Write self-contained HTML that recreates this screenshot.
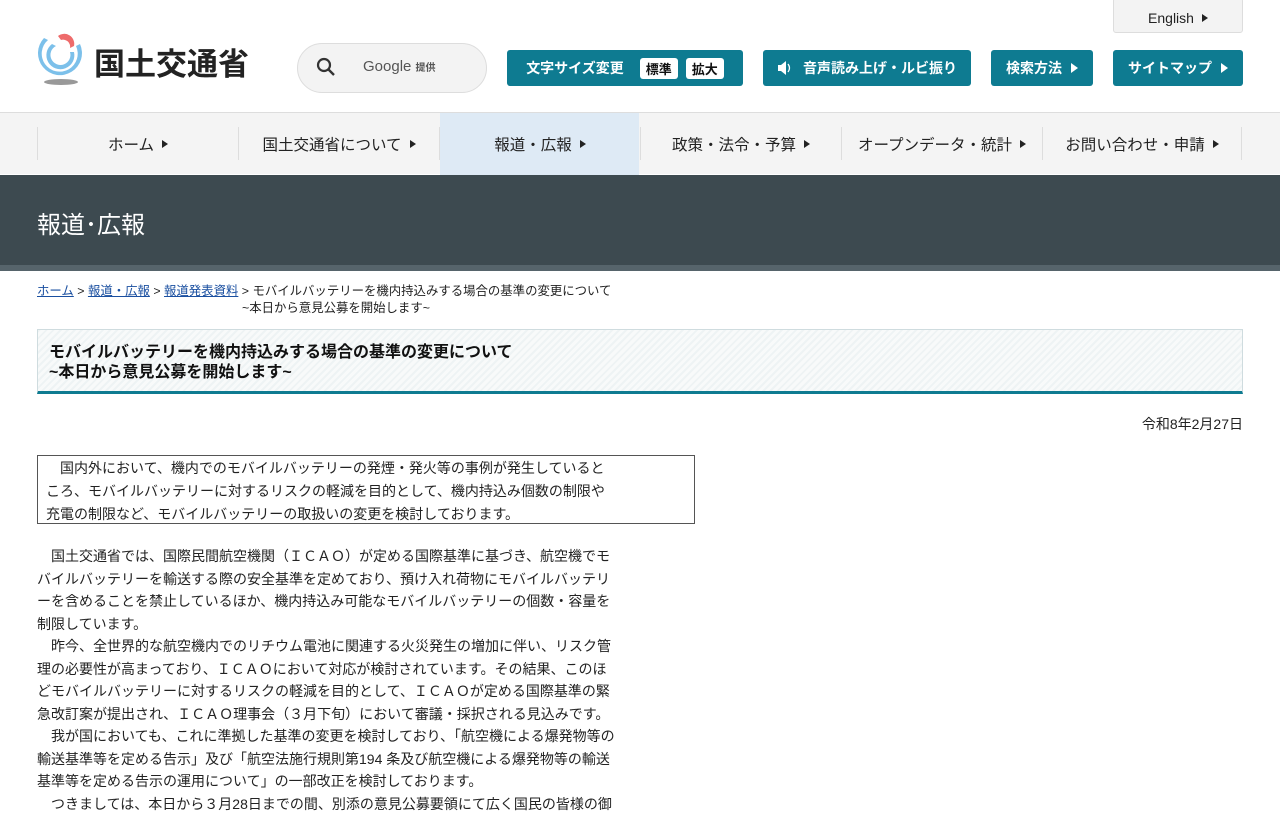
<!DOCTYPE html>
<html><head><meta charset="utf-8">
<style>
*{margin:0;padding:0;box-sizing:border-box}
body{width:1280px;height:800px;overflow:hidden;background:#fff;font-family:"Liberation Sans","Noto Sans CJK JP",sans-serif;color:#222;position:relative}
.abs{position:absolute}
.btn{position:absolute;top:50px;height:36px;background:#0e7b91;color:#fff;border-radius:3px;font-size:14px;font-weight:bold;display:flex;align-items:center;justify-content:center}
.tri{display:inline-block;width:0;height:0;border-left:7px solid currentColor;border-top:5px solid transparent;border-bottom:5px solid transparent;margin-left:9px}
.pill{background:#fff;color:#111;border-radius:3px;padding:1px 6px;font-size:13px;margin-left:8px}
.nav{position:absolute;top:112px;left:0;width:1280px;height:62px;background:#f4f4f4;border-top:1px solid #ddd}
.ni{position:absolute;top:14px;height:33px;border-left:1px solid #ddd;font-size:15.5px;display:flex;align-items:center;justify-content:center;color:#222}
.ni .tri{border-left-width:6px;border-top-width:4px;border-bottom-width:4px;margin-left:8px}
.body p{font-size:14px;line-height:22.5px;white-space:nowrap}
</style></head><body>
<svg class="abs" style="left:36px;top:32px" width="50" height="55" viewBox="0 0 50 55">
<path d="M8 6 A22 22 0 1 0 44 12 L40 14 A18 18 0 1 1 12 8Z" fill="#7cc0ea"/>
<path d="M16 12 A14 14 0 1 0 38 20 L34 20 A10 10 0 1 1 20 14Z" fill="#7cc0ea"/>
<path d="M22 4 A10 10 0 0 1 38 14 L34 16 A7 7 0 0 0 25 8Z" fill="#ee6b6b"/>
<ellipse cx="25" cy="50" rx="17" ry="3" fill="#999"/>
</svg>
<div class="abs" style="left:94px;top:39px;font-size:31px;font-weight:bold;color:#222;letter-spacing:0px">国土交通省</div>
<div class="abs" style="left:297px;top:43px;width:190px;height:50px;border:1px solid #ddd;border-radius:25px;background:#f3f3f3"></div>
<svg class="abs" style="left:316px;top:57px" width="20" height="20" viewBox="0 0 20 20"><circle cx="8" cy="8" r="6" fill="none" stroke="#333" stroke-width="2.2"/><path d="M12.5 12.5L18 18" stroke="#333" stroke-width="2.4"/></svg>
<div class="abs" style="left:363px;top:58px;font-size:15px;color:#555">Google <span style="font-size:10px;font-weight:bold">提供</span></div>
<div class="abs" style="left:1113px;top:-2px;width:130px;height:35px;background:#f3f3f3;border:1px solid #ddd;border-radius:3px;font-size:14px;display:flex;align-items:center;justify-content:center;padding-top:4px">English<span class="tri" style="border-left-width:6px;border-top-width:4px;border-bottom-width:4px;margin-left:8px"></span></div>
<div class="btn" style="left:507px;width:236px">文字サイズ変更<span class="pill" style="margin-left:16px">標準</span><span class="pill">拡大</span></div>
<div class="btn" style="left:763px;width:208px"><svg width="16" height="16" viewBox="0 0 16 16" style="margin-right:10px"><path d="M1 5h3l5-4v14l-5-4H1z" fill="#fff"/><path d="M11 4q3 4 0 8" stroke="#fff" fill="none" stroke-width="1.3"/></svg>音声読み上げ・ルビ振り</div>
<div class="btn" style="left:991px;width:102px">検索方法<span class="tri"></span></div>
<div class="btn" style="left:1113px;width:130px">サイトマップ<span class="tri"></span></div>
<div class="nav">
<div class="abs" style="left:440px;top:0;width:199px;height:62px;background:#deeaf5"></div>
<div class="ni" style="left:37px;width:201px">ホーム<span class="tri"></span></div>
<div class="ni" style="left:238px;width:201px">国土交通省について<span class="tri"></span></div>
<div class="ni" style="left:439px;width:201px">報道・広報<span class="tri"></span></div>
<div class="ni" style="left:640px;width:201px">政策・法令・予算<span class="tri"></span></div>
<div class="ni" style="left:841px;width:201px">オープンデータ・統計<span class="tri"></span></div>
<div class="ni" style="left:1042px;width:200px;border-right:1px solid #ddd">お問い合わせ・申請<span class="tri"></span></div>
</div>
<div class="abs" style="left:0;top:175px;width:1280px;height:90px;background:#3d4a50"></div>
<div class="abs" style="left:0;top:265px;width:1280px;height:6px;background:#56646b"></div>
<div class="abs" style="left:37px;top:205px;font-size:24px;color:#fff">報道･広報</div>
<div class="abs" style="left:37px;top:283px;font-size:12.4px;line-height:17px;color:#222">
<a style="color:#1a4fa0;text-decoration:underline">ホーム</a> &gt; <a style="color:#1a4fa0;text-decoration:underline">報道・広報</a> &gt; <a style="color:#1a4fa0;text-decoration:underline">報道発表資料</a> &gt; モバイルバッテリーを機内持込みする場合の基準の変更について<br><span style="padding-left:205px">~本日から意見公募を開始します~</span></div>
<div class="abs" style="left:37px;top:329px;width:1206px;height:65px;border:1px solid #cfdcdf;border-bottom:3px solid #0e7b91;background:repeating-linear-gradient(135deg,#eef3f4 0 2px,#f8fafa 2px 5px);padding:13px 0 0 11px;font-size:16px;font-weight:bold;line-height:20px;color:#111">モバイルバッテリーを機内持込みする場合の基準の変更について<br>~本日から意見公募を開始します~</div>
<div class="abs" style="right:37px;top:414px;font-size:14px">令和8年2月27日</div>
<div class="abs body" style="left:37px;top:455px;width:658px;height:69px;border:1px solid #555;padding:1px 0 0 8px"><p style="line-height:23px">　国内外において、機内でのモバイルバッテリーの発煙・発火等の事例が発生していると<br>ころ、モバイルバッテリーに対するリスクの軽減を目的として、機内持込み個数の制限や<br>充電の制限など、モバイルバッテリーの取扱いの変更を検討しております。</p></div>
<div class="abs body" style="left:37px;top:545px"><p>　国土交通省では、国際民間航空機関（ＩＣＡＯ）が定める国際基準に基づき、航空機でモ<br>バイルバッテリーを輸送する際の安全基準を定めており、預け入れ荷物にモバイルバッテリ<br>ーを含めることを禁止しているほか、機内持込み可能なモバイルバッテリーの個数・容量を<br>制限しています。<br>　昨今、全世界的な航空機内でのリチウム電池に関連する火災発生の増加に伴い、リスク管<br>理の必要性が高まっており、ＩＣＡＯにおいて対応が検討されています。その結果、このほ<br>どモバイルバッテリーに対するリスクの軽減を目的として、ＩＣＡＯが定める国際基準の緊<br>急改訂案が提出され、ＩＣＡＯ理事会（３月下旬）において審議・採択される見込みです。<br>　我が国においても、これに準拠した基準の変更を検討しており、「航空機による爆発物等の<br>輸送基準等を定める告示」及び「航空法施行規則第194 条及び航空機による爆発物等の輸送<br>基準等を定める告示の運用について」の一部改正を検討しております。<br>　つきましては、本日から３月28日までの間、別添の意見公募要領にて広く国民の皆様の御</p></div>
</body></html>
